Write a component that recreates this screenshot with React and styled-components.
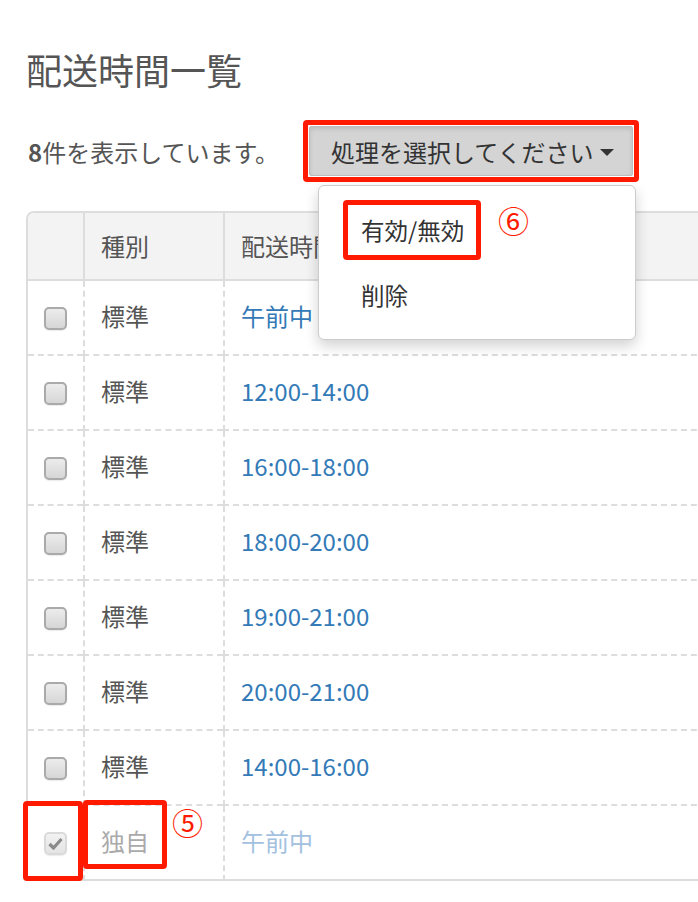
import styled, { createGlobalStyle, css } from "styled-components";

const GlobalStyle = createGlobalStyle`
    body {
        margin: 0;
        background: #fff;
        font-family: "Noto Sans CJK JP", "Noto Sans", sans-serif;
        color: #555;
        overflow: hidden;
    }
`

const RED = "#ff1a00";

const rows = [
    { type: "標準", time: "午前中" },
    { type: "標準", time: "12:00-14:00" },
    { type: "標準", time: "16:00-18:00" },
    { type: "標準", time: "18:00-20:00" },
    { type: "標準", time: "19:00-21:00" },
    { type: "標準", time: "20:00-21:00" },
    { type: "標準", time: "14:00-16:00" },
    { type: "独自", time: "午前中", disabled: true, checked: true },
];

export default function App() {
    return (
        <Page>
            <GlobalStyle />
            <Title>配送時間一覧</Title>

            <Toolbar>
                <Count><b>8</b>件を表示しています。</Count>
                <ActionWrap>
                    <Highlight>
                        <ActionButton>
                            処理を選択してください
                            <Caret />
                        </ActionButton>
                    </Highlight>
                    <Menu>
                        <MenuItem>
                            <ItemBox />
                            有効/無効
                            <Mark $left={179} $top={3}>⑥</Mark>
                        </MenuItem>
                        <MenuItem>削除</MenuItem>
                    </Menu>
                </ActionWrap>
            </Toolbar>

            <Table>
                <thead>
                    <tr>
                        <Th $narrow></Th>
                        <Th $mid>種別</Th>
                        <Th>配送時間</Th>
                    </tr>
                </thead>
                <tbody>
                    {rows.map((r, i) => (
                        <Row key={i}>
                            <Td $center>
                                <Check $disabled={r.disabled}>
                                    {r.checked && (
                                        <svg width="15" height="13" viewBox="0 0 15 13">
                                            <path d="M1.5 7 L5.5 11 L13.5 2" fill="none" stroke="#8a8a8a" strokeWidth="3.2" strokeLinejoin="round" />
                                        </svg>
                                    )}
                                </Check>
                                {r.disabled && <CheckBox />}
                            </Td>
                            <Td $muted={r.disabled}>
                                {r.type}
                                {r.disabled && (
                                    <>
                                        <TypeBox />
                                        <Mark $left={87} $top={-4}>⑤</Mark>
                                    </>
                                )}
                            </Td>
                            <Td $link $muted={r.disabled}>{r.time}</Td>
                        </Row>
                    ))}
                </tbody>
            </Table>
        </Page>
    )
}

const Page = styled.div`
    padding: 44px 0 0 26px;
    width: 900px;
`
const Title = styled.h1`
    margin: 0;
    font-size: 36px;
    font-weight: 400;
    line-height: 50px;
    color: #555;
`
const Toolbar = styled.div`
    display: flex;
    align-items: center;
    margin-top: 26px;
`
const Count = styled.div`
    font-size: 24px;
    color: #555;
    padding-left: 2px;
    b {
        font-weight: 700;
    }
`
const ActionWrap = styled.div`
    position: relative;
    margin-left: 24px;
`
const Highlight = styled.div`
    border: 5px solid ${RED};
    border-radius: 4px;
    padding: 1px;
`
const ActionButton = styled.button`
    display: flex;
    align-items: center;
    gap: 6px;
    height: 50px;
    padding: 0 18px 0 21px;
    border: 1px solid #bdbdbd;
    border-radius: 2px;
    background: #d4d4d4;
    box-shadow: inset 0 2px 4px rgba(0, 0, 0, 0.12);
    font-family: inherit;
    font-size: 24px;
    color: #333;
`
const Caret = styled.span`
    width: 0;
    height: 0;
    border-left: 7px solid transparent;
    border-right: 7px solid transparent;
    border-top: 7px solid #333;
    margin-top: 2px;
`
const Menu = styled.div`
    position: absolute;
    left: 15px;
    top: 65px;
    width: 318px;
    height: 155px;
    z-index: 2;
    background: #fff;
    border: 1px solid #ccc;
    border-radius: 6px;
    box-shadow: 0 6px 14px rgba(0, 0, 0, 0.18);
    padding-top: 11px;
    box-sizing: border-box;
`
const MenuItem = styled.div`
    position: relative;
    height: 65px;
    display: flex;
    align-items: center;
    padding-left: 42px;
    font-size: 23.5px;
    color: #333;
`
const boxLine = css`
    position: absolute;
    border: 5px solid ${RED};
    border-radius: 4px;
    pointer-events: none;
`
const ItemBox = styled.span`
    ${boxLine}
    left: 24px;
    top: 3px;
    width: 128px;
    height: 50px;
`
const Mark = styled.span`
    position: absolute;
    left: ${p => p.$left}px;
    top: ${p => p.$top}px;
    font-size: 31px;
    line-height: 40px;
    color: ${RED};
`
const Table = styled.table`
    margin-top: 29px;
    width: 860px;
    border-collapse: separate;
    border-spacing: 0;
    border-left: 2px solid #ddd;
    border-top: 2px solid #ddd;
    border-top-left-radius: 8px;
    font-size: 24px;
`
const Th = styled.th`
    height: 68px;
    width: ${p => (p.$narrow ? "55px" : p.$mid ? "140px" : "auto")};
    padding: 0 0 2px 16px;
    text-align: left;
    font-weight: 400;
    color: #555;
    background: #f3f3f3;
    border-bottom: 2px solid #ddd;
    border-left: ${p => (p.$narrow ? "none" : "2px solid #ddd")};
    box-sizing: border-box;
    &:first-child {
        border-top-left-radius: 7px;
        padding: 0;
    }
`
const Row = styled.tr`
    &:last-child td {
        border-bottom: 2px solid #ddd;
    }
`
const Td = styled.td`
    position: relative;
    height: 75px;
    padding: 0 0 5px ${p => (p.$center ? "0" : "16px")};
    text-align: ${p => (p.$center ? "center" : "left")};
    border-bottom: 2px dashed #ddd;
    border-left: 2px dashed #ddd;
    color: ${p => (p.$link ? "#337ab7" : "#555")};
    ${p => p.$muted && css`
        color: ${p.$link ? "#a3c1df" : "#aaa"};
    `}
    &:first-child {
        border-left: none;
    }
    box-sizing: border-box;
`
const Check = styled.span`
    display: inline-flex;
    align-items: center;
    justify-content: center;
    vertical-align: middle;
    width: 23px;
    height: 23px;
    box-sizing: border-box;
    border: 2px solid ${p => (p.$disabled ? "#dadada" : "#aaa")};
    border-radius: 5px;
    background: ${p => (p.$disabled ? "linear-gradient(#f2f2f2, #e4e4e4)" : "linear-gradient(#ececec, #d6d6d6)")};
    box-shadow: 0 1px 1px rgba(0, 0, 0, 0.08);
`
const CheckBox = styled.span`
    ${boxLine}
    left: -5px;
    top: -5px;
    width: 50px;
    height: 70px;
`
const TypeBox = styled.span`
    ${boxLine}
    left: -2px;
    top: -6px;
    width: 74px;
    height: 59px;
`
